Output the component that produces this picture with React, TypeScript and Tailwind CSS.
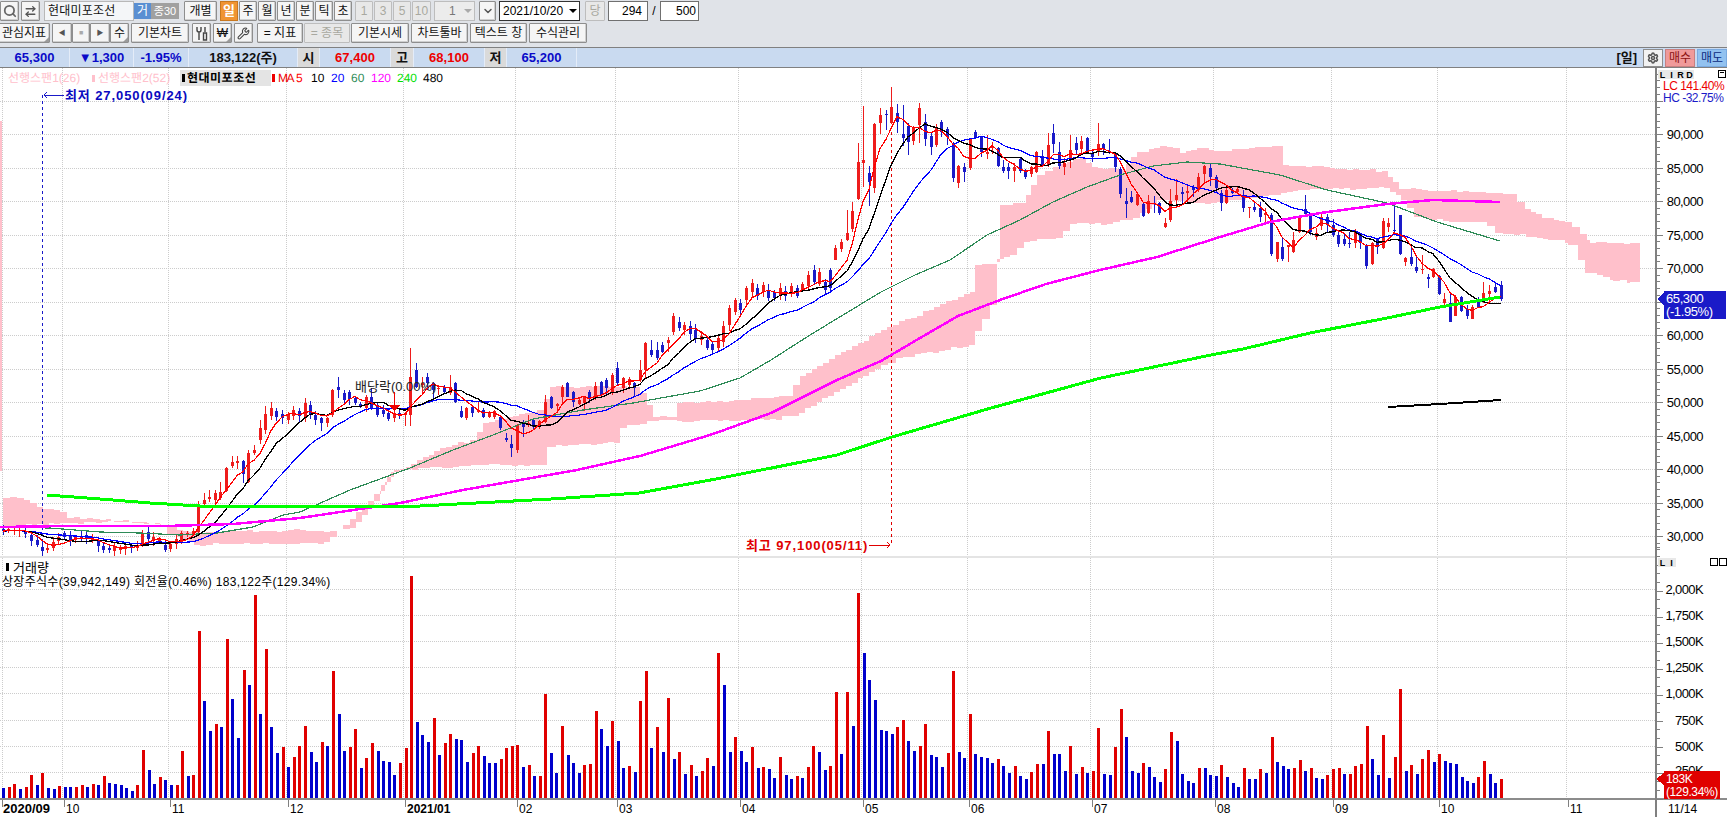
import type { ReactNode } from 'react';
import { Search, ArrowRightLeft, Wrench, Settings, ChevronDown } from 'lucide-react';

// volume bars in 1/3 px, positive = red, negative = blue
const VOL = [
  -32, 36, 44, -30, 36, 71, -42, 77, -33, -30, 39, -36, -36, 36, 42, -36, 45, -42, 69, -47,
  -44, -42, -33, -24, 42, 147, -87, -45, 66, -57, -42, 42, 144, -69, 72, 504, -294, -204, 225, -216,
  480, -300, -183, 387, -342, 612, -255, 450, -216, -138, 156, -96, 126, 159, 219, -141, -111, 171, -159, 384,
  -255, -144, 156, 210, -93, 123, 168, -144, -114, -111, -72, 108, 153, 669, -230,
  -191, -170, 242, -131, 167, 194, -179, -176, -110, 137, 158, -128, -107, -107, 119, 152, 158, 161, -95, 101,
  -68, 68, 314, -137, -77, 218, -131, -107, -77, 101, 104, 263, -209, -158, 233, -173, -92, 98, -80, 293,
  383, -152, 215, -140, 302, -119, 140, -74, 101, -68, 83, 122, -98, 437, -341, -140, 185, -143, -110, 155,
  -92, 95, -89, -62, 125, -71, -59, 68, -62, 95, 158, -140, -86, 98, 320, -134, 320, -218, 617, -437,
  -356, -296, -206, -203, -194, 215, 236, -173,
  -143, 158, 224, -131, -125, -95, 137, 383, -140, -122, 254, -134, -125, -122, -107, 119, -98, -77, 98, -68,
  -59, 80, 104, -104, 203, -134, -134, -83, 158, -74, 95, -77, 83, 212, -74, -71, 155, 269, -185, -83,
  -77, 107, -95, -65, -50, 89, 200, -173, -74, -53, -47, 92, -92, -71, -68, 101, -65, -47, -35, 92,
  -59, -59, 89, -77, 185, -110, -98, -89, 92, 116, -83, 92, -62, -59, 71, 89, 92, -74, 74, 98,
  104, 218, -119, -71, 191, -62, 125, 329,
  -83, 101, -74, 119, 146, -110, 134, -113, -107, -104, -65, -53, -47, 65, 113, -74, -47, 59,
];

type C = [number, number, number, number, number?, number?];

// candles read per crop: [x, bodyTop, bodyBottom, colour, wickTop, wickBottom], coordinates at 3x from ox,oy
const SEG_A: C[] = [
  [10, 237, 243, -1], [25, 238, 241, 1], [42, 239, 242, 1], [58, 240, 244, 1], [75, 247, 253, -1], [92, 256, 274, -1],
  [110, 270, 285, -1], [127, 292, 304, -1, 276, 317], [142, 293, 301, 1], [160, 276, 294, 1], [175, 261, 273, 1],
  [193, 250, 262, -1], [211, 259, 271, -1], [226, 261, 269, 1], [244, 259, 265, -1], [259, 256, 268, -1], [277, 266, 270, 1],
  [295, 273, 289, -1], [310, 288, 300, -1], [328, 295, 299, -1], [343, 288, 302, 1], [361, 295, 301, 1], [376, 288, 298, 1],
  [394, 289, 293, -1], [412, 286, 294, 1], [427, 249, 287, 1, 240, 290], [445, 245, 267, -1], [460, 261, 273, 1],
  [478, 268, 272, 1], [496, 285, 300, -1], [511, 281, 296, 1], [529, 267, 283, 1], [544, 248, 278, 1, 243, 282], [562, 248, 252, 1, 243, 262],
  [580, 242, 254, 1, 235, 258], [595, 170, 245, 1, 152, 248], [613, 149, 161, 1, 130, 165], [628, 140, 146, 1, 120, 155],
  [646, 130, 150, 1, 120, 165], [661, 127, 143, 1, 95, 150], [679, 55, 122, 1, 50, 125], [697, 37, 49, 1, 18, 55], [712, 34, 40, 1, 18, 58],
  [730, 32, 72, -1, 30, 98], [745, 10, 95, 1, 0, 100], [763, 0, 10, 1, -15, 15],
];
const SEG_B: C[] = [
  [260, 428, 440, 1, 420, 444], [265, 414, 430, 1, 406, 434], [271, 408, 416, 1, 402, 420], [276, 411, 417, -1, 408, 421],
  [282, 414, 418, -1, 410, 424], [288, 414, 420, 1, 412, 424], [293, 410, 416, 1, 406, 420], [299, 411, 416, -1, 408, 422],
];
const SEG_C: C[] = [
  [14, 190, 235, 1], [30, 195, 225, -1], [46, 225, 240, -1], [64, 235, 250, -1, 230, 272], [81, 235, 250, 1, 232, 262],
  [97, 150, 225, 1, 148, 230], [115, 140, 150, -1, 112, 175], [131, 160, 180, -1], [148, 155, 178, -1, 150, 195], [165, 175, 188, -1, 170, 195],
  [181, 193, 198, -1, 185, 205], [198, 170, 205, 1, 165, 215], [214, 170, 205, -1, 145, 210], [232, 195, 225, -1, 190, 232],
  [250, 210, 222, -1, 195, 232], [265, 218, 238, -1, 205, 242], [283, 218, 235, 1, 212, 245], [298, 219, 223, -1, 210, 238],
  [316, 220, 224, 1, 215, 258], [331, 110, 225, 1, 25, 258], [349, 90, 140, -1, 70, 145], [365, 130, 135, 1, 110, 165], [382, 110, 128, -1, 98, 150],
  [400, 130, 150, -1, 125, 178], [415, 143, 148, 1, 135, 165], [433, 140, 155, -1, 135, 158], [450, 142, 160, 1, 105, 165], [466, 128, 185, -1, 125, 190],
  [483, 212, 230, -1, 198, 235], [499, 205, 235, 1, 200, 240], [517, 200, 220, -1, 198, 232], [535, 210, 217, 1, 185, 220], [550, 210, 230, -1, 205, 235],
  [566, 218, 230, 1, 212, 233], [583, 212, 232, 1, 210, 236], [601, 230, 265, -1, 225, 270], [617, 293, 300, -1, 280, 305], [634, 312, 325, -1, 285, 350],
  [652, 255, 330, 1, 252, 340], [668, 250, 262, -1, 240, 292], [685, 248, 252, 1, 225, 262], [700, 240, 262, -1, 238, 268], [718, 243, 262, 1, 240, 268],
  [735, 185, 245, 1, 165, 248], [752, 170, 205, -1, 168, 208], [770, 193, 198, 1, 190, 212], [785, 140, 170, 1, 135, 190], [802, 128, 170, -1, 125, 172],
  [820, 155, 185, -1, 152, 200], [836, 180, 192, 1, 170, 195], [853, 170, 188, 1, 168, 212], [868, 155, 175, -1, 150, 190], [886, 138, 175, 1, 125, 180],
  [902, 125, 165, -1, 122, 168], [918, 120, 145, -1, 115, 165], [936, 105, 155, 1, 100, 165], [952, 85, 130, -1, 65, 135], [970, 115, 145, 1, 112, 160],
  [987, 118, 135, 1, 112, 142], [1003, 130, 145, -1, 125, 170], [1020, 90, 120, 1, 60, 125], [1036, 10, 90, 1, 5, 115], [1053, 30, 45, -1, 0, 50],
  [1070, 30, 55, -1, 5, 60], [1087, 15, 35, -1, 5, 40], [1105, 0, 10, 1, -8, 35],
];
const SEG_D: C[] = [
  [673, 316, 332, 1], [679, 322, 328, -1], [684, 325, 330, 1], [690, 326, 334, -1], [695, 330, 338, -1], [701, 336, 340, 1], [707, 340, 348, -1],
  [712, 344, 350, -1], [718, 338, 348, 1], [723, 326, 342, 1], [729, 308, 325, 1], [735, 300, 312, 1], [740, 303, 310, -1], [746, 288, 300, 1],
  [752, 283, 292, 1], [757, 288, 296, -1], [763, 285, 292, 1], [768, 290, 298, -1], [774, 292, 298, -1], [780, 288, 295, 1], [785, 291, 296, -1],
  [791, 286, 292, 1], [797, 288, 296, -1], [802, 284, 290, 1], [808, 275, 286, 1], [814, 270, 282, -1], [819, 272, 284, 1], [825, 282, 290, -1], [830, 270, 288, -1],
];
const SEG_E: C[] = [
  [46, 505, 540, 1, 495, 540], [64, 485, 507, 1, 478, 515], [80, 460, 480, 1, 390, 482], [97, 393, 447, 1, 365, 455], [115, 247, 357, 1, 190, 360],
  [130, 240, 248, 1, 78, 320], [148, 278, 305, -1, 258, 378], [163, 133, 325, 1, 130, 340], [181, 105, 128, 1, 85, 162], [197, 102, 105, -1, 90, 150],
  [214, 82, 128, 1, 22, 132], [232, 100, 125, -1, 72, 158], [248, 162, 175, -1, 75, 198], [265, 137, 187, -1, 130, 225], [280, 143, 182, 1, 138, 195],
  [298, 85, 135, 1, 68, 190], [316, 125, 178, -1, 102, 198], [332, 167, 200, -1, 158, 225], [349, 145, 195, 1, 132, 200], [364, 125, 155, -1, 120, 170],
  [382, 148, 170, -1, 142, 195], [400, 190, 293, -1, 185, 305], [415, 258, 310, 1, 255, 323], [433, 262, 275, -1, 250, 305], [449, 178, 263, 1, 175, 270],
  [466, 155, 172, -1, 150, 178], [482, 170, 215, -1, 168, 232], [500, 215, 222, 1, 165, 238], [516, 200, 204, 1, 185, 222], [533, 205, 258, -1, 200, 262],
  [550, 262, 272, -1, 240, 278], [565, 262, 272, -1, 250, 298], [583, 262, 272, 1, 250, 305], [601, 238, 272, -1, 235, 280], [616, 272, 290, -1, 268, 298],
  [634, 262, 283, 1, 258, 290], [649, 215, 275, 1, 212, 280], [667, 228, 258, -1, 210, 262], [685, 195, 255, 1, 160, 262], [700, 158, 193, -1, 132, 218],
  [718, 215, 258, -1, 185, 268], [733, 248, 262, 1, 235, 285], [751, 210, 240, 1, 165, 265], [767, 188, 210, -1, 170, 222], [784, 183, 208, 1, 168, 225],
  [802, 175, 218, -1, 172, 222], [817, 222, 232, -1, 210, 245], [835, 192, 215, 1, 130, 228], [850, 192, 208, -1, 188, 225], [868, 213, 217, -1, 178, 222],
  [886, 222, 262, -1, 218, 275], [901, 267, 342, -1, 262, 355], [919, 362, 372, -1, 325, 415], [934, 352, 366, -1, 332, 368], [952, 342, 375, 1, 335, 378],
  [970, 372, 408, -1, 370, 412], [985, 362, 400, 1, 345, 402], [1003, 368, 372, -1, 348, 398], [1018, 368, 400, -1, 365, 405], [1036, 428, 440, 1, 415, 445],
  [1051, 362, 420, 1, 328, 425], [1069, 345, 360, 1, 298, 380], [1087, 335, 342, -1, 322, 368], [1102, 332, 338, 1, 318, 365], [1120, 322, 330, -1, 315, 352],
  [1135, 290, 330, 1, 278, 335], [1153, 258, 282, 1, 255, 312], [1171, 265, 290, -1, 252, 318], [1187, 292, 325, -1, 285, 335],
];
const SEG_F: C[] = [
  [3, 10, 40, -1, 0, 62], [19, 0, 40, 1, -8, 42], [37, 0, 10, -1, -5, 12], [52, -3, 5, 1, -8, 12], [70, 20, 55, -1, 0, 65], [88, 50, 55, 1, 50, 85],
  [103, 50, 60, -1, 35, 65], [121, 55, 82, -1, 35, 95], [136, 70, 75, 1, 55, 100], [154, 75, 192, -1, 70, 198], [172, 155, 208, 1, 155, 215],
  [187, 172, 207, -1, 145, 212], [205, 165, 170, 1, 165, 215], [220, 150, 185, 1, 125, 188], [238, 82, 125, 1, 80, 128], [256, 58, 72, -1, 15, 75],
  [271, 75, 125, -1, 70, 135], [289, 128, 140, 1, 115, 150], [304, 82, 108, 1, 68, 120], [322, 80, 105, -1, 72, 125], [340, 105, 135, -1, 88, 140],
  [355, 135, 162, -1, 125, 172], [373, 148, 162, -1, 130, 168], [388, 158, 162, -1, 125, 175], [406, 125, 158, 1, 118, 175], [421, 130, 160, -1, 128, 178],
  [439, 168, 228, -1, 162, 238], [457, 158, 222, 1, 155, 225], [472, 148, 170, -1, 143, 192], [490, 92, 175, 1, 85, 178], [505, 98, 110, 1, 85, 125],
  [523, 120, 122, -1, 45, 128], [541, 75, 192, -1, 75, 196], [556, 205, 215, 1, 200, 228], [574, 200, 222, -1, 165, 228], [589, 232, 243, -1, 195, 248],
  [607, 236, 238, 1, 195, 252], [625, 260, 268, -1, 252, 295], [640, 238, 262, 1, 235, 265], [658, 258, 312, -1, 255, 315], [673, 328, 340, 1, 310, 350],
  [691, 340, 395, -1, 310, 395], [706, 322, 377, 1, 315, 378], [724, 320, 362, -1, 318, 365], [742, 358, 378, -1, 345, 388], [757, 350, 387, 1, 345, 388],
  [775, 330, 350, -1, 322, 352], [790, 310, 335, 1, 277, 340], [808, 302, 312, 1, 285, 340], [826, 290, 305, -1, 280, 310], [842, 285, 328, -1, 272, 332],
];

type Candle = { x: number; top: number; bot: number; up: boolean; wt: number; wb: number };

let seed = 7;
const rnd = () => {
  seed = (seed * 9301 + 49297) % 233280;
  return seed / 233280;
};

const place = (seg: C[], ox: number, oy: number, k: number): Candle[] =>
  seg.map(([x, t, b, c, wt, wb]) => {
    const top = oy + t / k;
    const bot = oy + b / k;
    return {
      x: Math.round(ox + x / k),
      top,
      bot,
      up: c > 0,
      wt: wt !== undefined ? oy + wt / k : top - 2 - rnd() * 4,
      wb: wb !== undefined ? oy + wb / k : bot + 2 + rnd() * 4,
    };
  });

const CANDLES = [
  ...place(SEG_A, 0, 450, 3),
  ...place(SEG_B, 0, 0, 1),
  ...place(SEG_C, 300, 340, 3),
  ...place(SEG_D, 0, 0, 1),
  ...place(SEG_E, 820, 80, 3),
  ...place(SEG_F, 1220, 190, 3),
];

const maLine = (n: number) => {
  const closes = CANDLES.map((c) => (c.up ? c.top : c.bot));
  return CANDLES.map((c, i) => {
    let s = 0;
    for (let k = 0; k < n; k++) s += closes[Math.max(0, i - k)];
    return `${c.x},${(s / n).toFixed(1)}`;
  }).join(' ');
};

// the cloud is drawn per trading day, so its outline comes out as small stairs
const stairs = (pts: string) => {
  const p = pts.split(' ').map((s) => s.split(',').map(Number));
  const out: string[] = [];
  for (let i = 0; i < p.length; i++) {
    const [x0, y0] = p[i];
    const [x1, y1] = p[(i + 1) % p.length];
    out.push(`${x0},${y0}`);
    const n = Math.floor(Math.abs(x1 - x0) / 5.6);
    let last = y0;
    for (let k = 1; k < n; k++) {
      const x = x0 + ((x1 - x0) * k) / n;
      const y = Math.round(y0 + ((y1 - y0) * k) / n + (rnd() - 0.5) * 2.4);
      out.push(`${x.toFixed(1)},${last}`, `${x.toFixed(1)},${y}`);
      last = y;
    }
    out.push(`${x1},${last}`);
  }
  return out.join(' ');
};

const MA60 =
  '0,527 50,528 100,532 140,533 180,535 217,533 253,527 283,515 300,512 350,490 410,468 453,450 493,435 533,419 583,410 633,403 700,391 740,378 771,360 810,335 848,312 881,292 915,275 950,260 987,235 1020,220 1053,202 1087,187 1120,175 1153,166 1187,162 1220,164 1280,175 1327,190 1387,203 1437,222 1500,241';
const MA120 =
  '0,527 67,526 167,526 233,524 300,518 400,503 463,490 577,470 640,456 700,438 716,433 771,413 837,380 881,361 920,338 958,316 1000,300 1046,284 1100,270 1157,257 1220,237 1270,222 1320,213 1387,204 1433,200 1500,202';
const MA240 =
  '47,495 100,499 150,503 200,506 300,506 420,506 551,499 639,493 716,479 837,455 892,437 991,408 1101,378 1211,355 1243,349 1310,333 1387,318 1440,307 1500,297';
const CLOUD = stairs(
  '3,498 17,498 30,503 43,509 60,512 67,518 100,520 140,522 167,525 177,530 200,533 300,530 330,531 350,528 374,501 391,472 400,470 417,460 440,448 470,440 483,423 507,417 537,410 550,387 633,387 640,393 653,417 667,417 677,403 700,402 740,400 785,396 800,376 881,330 970,292 975,265 997,262 1000,205 1020,203 1037,175 1053,167 1080,158 1092,167 1120,170 1137,152 1160,146 1173,148 1180,153 1197,148 1220,151 1272,146 1283,165 1382,171 1399,189 1509,194 1525,209 1542,218 1565,222 1587,240 1590,243 1630,243 1640,246 1640,282 1630,283 1627,280 1613,280 1610,277 1590,273 1585,260 1578,245 1568,243 1565,240 1520,235 1503,233 1487,222 1460,222 1420,217 1407,200 1390,188 1310,190 1211,204 1163,200 1140,218 1113,224 1077,224 1063,238 1030,242 1017,255 997,262 997,305 975,345 903,358 881,369 799,416 770,420 700,421 653,421 640,425 627,428 620,443 550,447 547,465 477,465 400,470 374,501 350,525 330,542 300,544 250,543 200,545 177,535 167,525 120,522 60,524 3,527',
);

const RED = '#ee1c1c';
const BLUE = '#1a1ac8';
const MONTHS = [62, 168, 286, 403, 515, 615, 738, 861, 967, 1090, 1213, 1331, 1437, 1566];
const MONTH_LABELS = ['10', '11', '12', '2021/01', '02', '03', '04', '05', '06', '07', '08', '09', '10', '11'];
const PRICES = [90000, 85000, 80000, 75000, 70000, 65000, 60000, 55000, 50000, 45000, 40000, 35000, 30000];
const VOLS = ['2,000K', '1,750K', '1,500K', '1,250K', '1,000K', '750K', '500K', '250K'];

const priceY = (p: number) => 335 - (p - 60000) * 0.0067;

function Chart() {
  const ticks: ReactNode[] = [];
  for (let p = 28000; p <= 100000; p += 1000) {
    const long = p % 5000 === 0;
    const y = Math.round(priceY(p)) + 0.5;
    ticks.push(<line key={`p${p}`} x1={1657} x2={long ? 1663 : 1660} y1={y} y2={y} stroke="#808080" />);
  }
  for (let i = 0; i < 30; i++) {
    const y = Math.round(798.7 - i * 8.67) + 0.5;
    ticks.push(<line key={`v${i}`} x1={1657} x2={i % 3 === 0 ? 1663 : 1660} y1={y} y2={y} stroke="#808080" />);
  }
  const step = (1500.7 - 3.3) / (VOL.length - 1);

  return (
    <svg viewBox="0 68 1727 749" className="block w-[1727px] h-[749px]" shapeRendering="crispEdges">
      {/* grid */}
      {[...PRICES, 95000].map((p) => (
        <line key={p} x1={0} x2={1656} y1={Math.round(priceY(p)) + 0.5} y2={Math.round(priceY(p)) + 0.5} stroke="#cccccc" strokeDasharray="1 1" />
      ))}
      {[589, 615, 641, 667, 693, 720, 746, 772].map((y) => (
        <line key={y} x1={0} x2={1656} y1={y + 0.5} y2={y + 0.5} stroke="#cccccc" strokeDasharray="1 1" />
      ))}
      {[2, ...MONTHS].map((x) => (
        <line key={x} x1={x + 0.5} x2={x + 0.5} y1={68} y2={799} stroke="#cccccc" strokeDasharray="1 1" />
      ))}

      {/* ichimoku cloud */}
      <rect x={0} y={121} width={2} height={350} fill="#ffc0cb" />
      <polygon points={CLOUD} fill="#ffc0cb" />

      {/* dashed markers */}
      <line x1={42.5} x2={42.5} y1={95} y2={552} stroke="#1a1ac8" strokeDasharray="3 3" />
      <line x1={891.5} x2={891.5} y1={120} y2={545} stroke="#e00000" strokeDasharray="3 3" />

      {/* candles */}
      {CANDLES.map((c, i) => (
        <g key={i} fill={c.up ? RED : BLUE} stroke="none">
          <rect x={c.x} y={c.wt} width={1} height={Math.max(1, c.wb - c.wt)} />
          <rect x={c.x - 1} y={c.top} width={3} height={Math.max(1, c.bot - c.top)} />
        </g>
      ))}

      {/* moving averages */}
      <polyline points={MA60} fill="none" stroke="#2e8b57" strokeWidth={1.2} />
      <polyline points={maLine(20)} fill="none" stroke="#0000ff" strokeWidth={1.2} />
      <polyline points={maLine(10)} fill="none" stroke="#000000" strokeWidth={1.3} />
      <polyline points={maLine(5)} fill="none" stroke="#ff0000" strokeWidth={1.2} />
      <polyline points={MA120} fill="none" stroke="#ff00ff" strokeWidth={2.5} />
      <polyline points={MA240} fill="none" stroke="#00ff00" strokeWidth={3} />
      <polyline points="1388,407 1440,404 1501,400" fill="none" stroke="#000000" strokeWidth={2} />

      {/* volume */}
      {VOL.map((v, i) => {
        const h = Math.abs(v) / 3;
        return (
          <rect key={i} x={Math.round(3.3 + i * step) - 1} y={798.7 - h} width={3} height={h} fill={v > 0 ? '#e00000' : '#0000cc'} />
        );
      })}

      {/* legend */}
      <g fontSize={12} textRendering="geometricPrecision">
        <text x={8} y={82} fill="#ffc0cb">선행스팬1(26)</text>
        <rect x={92} y={75} width={3} height={7} fill="#ffc0cb" />
        <text x={98} y={82} fill="#ffc0cb">선행스팬2(52)</text>
        <rect x={180} y={70} width={91} height={16} fill="#e4e4e4" />
        <rect x={182} y={74} width={3} height={8} fill="#000" />
        <text x={187} y={82} fontWeight={700} fill="#000" letterSpacing={0.5}>현대미포조선</text>
        <rect x={272} y={74} width={3} height={8} fill="#ee0000" />
        <text x={278} y={82} fill="#ee0000" letterSpacing={-1.5}>MA</text>
        <text x={296} y={82} fill="#ff0000">5</text>
        <text x={311} y={82} fill="#000">10</text>
        <text x={331} y={82} fill="#0000ff">20</text>
        <text x={351} y={82} fill="#2e8b57">60</text>
        <text x={371} y={82} fill="#ff00ff">120</text>
        <text x={397} y={82} fill="#00e000">240</text>
        <text x={423} y={82} fill="#000">480</text>
      </g>

      {/* low / high annotations */}
      <line x1={44} x2={64} y1={95.5} y2={95.5} stroke="#1a1ac8" />
      <polyline points="47,92 44,95 47,98" fill="none" stroke="#1a1ac8" />
      <text x={65} y={100} fontSize={13} fontWeight={700} fill="#0a0ac0" letterSpacing={0.9}>최저 27,050(09/24)</text>
      <text x={746} y={550} fontSize={13} fontWeight={700} fill="#e00000" letterSpacing={0.9}>최고 97,100(05/11)</text>
      <line x1={869} x2={890} y1={545.5} y2={545.5} stroke="#e00000" />
      <polyline points="887,542 890,545 887,548" fill="none" stroke="#e00000" />

      {/* dividend marker */}
      <text x={355} y={391} fontSize={13} fill="#222">배당락(0.00%)</text>
      <line x1={394.5} x2={394.5} y1={392} y2={406} stroke="#ee0000" />
      <polygon points="389,405 400,405 394.5,411" fill="#ee0000" />

      {/* pane separator and axes */}
      <rect x={0} y={556} width={1656} height={2} fill="#e4e4e4" />
      <rect x={0} y={798} width={1727} height={2} fill="#8c8c8c" />
      <rect x={1655} y={68} width={2} height={749} fill="#808080" />
      {ticks}
      {[0, ...MONTHS].map((x) => (
        <line key={`t${x}`} x1={x + 2.5} x2={x + 2.5} y1={800} y2={807} stroke="#808080" />
      ))}

      {/* price axis */}
      <g fontSize={13} letterSpacing={-0.6} fill="#000">
        {PRICES.filter((p) => p !== 65000).map((p) => (
          <text key={p} x={1703} y={Math.round(priceY(p)) + 5} textAnchor="end">
            {p.toLocaleString('en-US')}
          </text>
        ))}
        {VOLS.map((v, i) => (
          <text key={v} x={1703} y={[589, 615, 641, 667, 693, 720, 746, 770][i] + 5} textAnchor="end">
            {v}
          </text>
        ))}
      </g>
      <text x={1663} y={90} fontSize={12} letterSpacing={-0.5} fill="#ee0000">LC 141.40%</text>
      <text x={1663} y={102} fontSize={12} letterSpacing={-0.5} fill="#1a1ac8">HC -32.75%</text>

      {/* L I R D boxes */}
      <g fontSize={9} fontWeight={700} fill="#000">
        {[['L', 1658], ['I', 1667], ['R', 1676], ['D', 1685]].map(([t, x]) => (
          <g key={t as string}>
            <rect x={x as number} y={70} width={9} height={9} fill="#e8e8e8" />
            <text x={(x as number) + 4.5} y={78} textAnchor="middle">{t}</text>
          </g>
        ))}
        <rect x={1658} y={558} width={9} height={9} fill="#e8e8e8" />
        <text x={1662.5} y={566} textAnchor="middle">L</text>
        <rect x={1667} y={558} width={9} height={9} fill="#e8e8e8" />
        <text x={1671.5} y={566} textAnchor="middle">I</text>
      </g>
      <rect x={1718.5} y={70.5} width={7} height={7} fill="none" stroke="#000" />
      <rect x={1720} y={72} width={4} height={1} fill="#000" />
      <rect x={1710.5} y={558.5} width={7} height={7} fill="none" stroke="#000" />
      <rect x={1719.5} y={558.5} width={7} height={7} fill="none" stroke="#000" />

      {/* current value flags */}
      <polygon points="1657,299 1664,293 1664,305" fill="#1a1ac8" />
      <rect x={1664} y={291} width={62} height={28} fill="#1a1ac8" />
      <text x={1666} y={303} fontSize={13} fill="#fff" letterSpacing={-0.4}>65,300</text>
      <text x={1666} y={316} fontSize={13} fill="#fff" letterSpacing={-0.4}>(-1.95%)</text>
      <polygon points="1656,779 1664,773 1664,785" fill="#e00000" />
      <rect x={1664} y={771} width={56} height={28} fill="#e00000" />
      <text x={1666} y={783} fontSize={12} fill="#fff" letterSpacing={-0.4}>183K</text>
      <text x={1666} y={796} fontSize={12} fill="#fff" letterSpacing={-0.4}>(129.34%)</text>

      {/* volume pane captions */}
      <rect x={6} y={563} width={3} height={8} fill="#000" />
      <text x={13} y={572} fontSize={13} fill="#000">거래량</text>
      <text x={2} y={586} fontSize={12} fill="#000" letterSpacing={0.3}>상장주식수(39,942,149) 회전율(0.46%) 183,122주(129.34%)</text>

      {/* date axis */}
      <text x={3} y={813} fontSize={13} fontWeight={700} fill="#000">2020/09</text>
      {MONTHS.map((x, i) => (
        <text key={x} x={x + 4} y={813} fontSize={12} fontWeight={MONTH_LABELS[i] === '2021/01' ? 700 : 400} fill="#000">
          {MONTH_LABELS[i]}
        </text>
      ))}
      <text x={1668} y={813} fontSize={12} fill="#000">11/14</text>
    </svg>
  );
}

function Btn({ className, children }: { className: string; children?: ReactNode }) {
  return (
    <div
      className={`relative h-[20px] flex items-center justify-center shrink-0 border border-[#8e8e8e] rounded-[1px] bg-[#f5f5f5] shadow-[inset_-1px_-1px_0_#cfcfcf] text-[12px] text-[#111] whitespace-nowrap ${className}`}
    >
      {children}
    </div>
  );
}

function Off({ className, children }: { className: string; children?: ReactNode }) {
  return (
    <div className={`h-[20px] flex items-center justify-center shrink-0 border border-[#bdbdbd] rounded-[1px] bg-[#e8e8e8] text-[12px] text-[#a8a8a0] ${className}`}>
      {children}
    </div>
  );
}

function Corner() {
  return <span className="absolute right-0 bottom-0 w-0 h-0 border-l-[5px] border-l-transparent border-b-[5px] border-b-[#9a9a9a]" />;
}

function InfoCell({ className, children }: { className: string; children: ReactNode }) {
  return (
    <div className={`h-full flex items-center justify-center shrink-0 border-r border-[#e4ecf8] font-bold text-[13px] ${className}`}>
      {children}
    </div>
  );
}

function ToolsIcon() {
  return (
    <svg width="14" height="15" viewBox="0 0 14 15" fill="none" stroke="#444" strokeWidth="1.4">
      <path d="M2 1v3a2 2 0 0 0 4 0V1M4 6v8" />
      <path d="M10 1v5M8.5 7h3v7h-3z" />
    </svg>
  );
}

export default function App() {
  return (
    <div className="w-[1727px] h-[817px] overflow-hidden bg-white flex flex-col [font-family:'Liberation_Sans','Noto_Sans_CJK_KR',sans-serif]">
      <div className="h-[47px] bg-[#e0e3e8] pt-px shrink-0">
        {/* first toolbar row */}
        <div className="flex items-center h-[20px]">
          <Btn className="w-[19px]"><Search size={14} strokeWidth={3} color="#666" /></Btn>
          <Btn className="w-[19px] ml-[2px]"><ArrowRightLeft size={13} strokeWidth={2.5} color="#555" /></Btn>
          <div className="w-[90px] h-[20px] ml-[4px] flex items-center pl-[3px] text-[12px] text-[#111] bg-[#f4f6f8] border border-[#b8b8b8] tracking-[0.2px]">현대미포조선</div>
          <div className="w-[17px] h-[16px] flex items-center justify-center bg-[#5a8fd2] text-white text-[12px]">거</div>
          <div className="w-[28px] h-[16px] flex items-center justify-center bg-[#a0a0a0] text-white text-[11px]">종30</div>
          <Btn className="w-[33px] ml-[5px]">개별</Btn>
          <div className="w-[18px] h-[20px] ml-[3px] flex items-center justify-center bg-[#f09433] border border-[#c87820] text-white font-bold text-[13px]">일</div>
          <div className="flex gap-px ml-px">
            <Btn className="w-[18px]">주</Btn>
            <Btn className="w-[18px]">월</Btn>
            <Btn className="w-[18px]">년</Btn>
            <Btn className="w-[18px]">분</Btn>
            <Btn className="w-[18px]">틱</Btn>
            <Btn className="w-[18px]">초</Btn>
          </div>
          <div className="flex gap-px ml-[3px]">
            <Off className="w-[18px]">1</Off>
            <Off className="w-[18px]">3</Off>
            <Off className="w-[18px]">5</Off>
            <Off className="w-[19px]">10</Off>
          </div>
          <div className="w-[41px] h-[20px] ml-[3px] flex items-center justify-between border border-[#bdbdbd] bg-[#ececec] text-[12px] text-[#777] pl-[14px] pr-[2px]">
            <span>1</span>
            <span className="w-0 h-0 border-l-[4px] border-r-[4px] border-t-[4px] border-l-transparent border-r-transparent border-t-[#aaa]" />
          </div>
          <Btn className="w-[17px] ml-[4px]"><ChevronDown size={12} strokeWidth={3} color="#555" /></Btn>
          <div className="w-[81px] h-[20px] ml-[3px] flex items-center justify-between border border-[#333] bg-white text-[12px] text-black pl-[3px] pr-[2px]">
            <span>2021/10/20</span>
            <span className="w-0 h-0 border-l-[4px] border-r-[4px] border-t-[4px] border-l-transparent border-r-transparent border-t-black" />
          </div>
          <Off className="w-[20px] ml-[5px]">당</Off>
          <div className="w-[40px] h-[20px] ml-[3px] flex items-center justify-end pr-[5px] border border-[#707070] bg-white text-[12px] text-black">294</div>
          <span className="w-[12px] text-center text-[12px] text-black">/</span>
          <div className="w-[39px] h-[20px] flex items-center justify-end pr-[2px] border border-[#707070] bg-white text-[12px] text-black">500</div>
        </div>

        {/* second toolbar row */}
        <div className="flex items-center h-[20px] mt-[2px] ml-[-2px]">
          <Btn className="w-[52px]">관심지표<Corner /></Btn>
          <div className="flex ml-[2px]">
            <Btn className="w-[20px]"><span className="text-[7px] text-[#555]">◀</span></Btn>
            <Btn className="w-[18px]"><span className="text-[7px] text-[#aaa]">■</span></Btn>
            <Btn className="w-[20px]"><span className="text-[7px] text-[#555]">▶</span></Btn>
            <Btn className="w-[19px]">수<Corner /></Btn>
          </div>
          <Btn className="w-[58px] ml-[2px]">기본차트</Btn>
          <Btn className="w-[19px] ml-[3px]"><ToolsIcon /></Btn>
          <Btn className="w-[19px] ml-[2px]">₩<Corner /></Btn>
          <Btn className="w-[19px] ml-[2px]"><Wrench size={13} strokeWidth={2} color="#444" /></Btn>
          <Btn className="w-[46px] ml-[4px]">= 지표</Btn>
          <Off className="w-[46px] ml-px">= 종목</Off>
          <Btn className="w-[58px] ml-px">기본시세</Btn>
          <Btn className="w-[57px] ml-[2px]">차트툴바</Btn>
          <Btn className="w-[57px] ml-[2px]">텍스트 창</Btn>
          <Btn className="w-[58px] ml-[2px]">수식관리</Btn>
        </div>
      </div>

      {/* quote strip */}
      <div className="h-[21px] shrink-0 flex items-center bg-[#c9daf0] border-y border-[#808080]">
        <InfoCell className="w-[70px] text-[#0a0ac8]">65,300</InfoCell>
        <InfoCell className="w-[64px] text-[#0a0ac8]">▼1,300</InfoCell>
        <InfoCell className="w-[55px] text-[#0a0ac8]">-1.95%</InfoCell>
        <InfoCell className="w-[109px] text-[#111]">183,122(주)</InfoCell>
        <InfoCell className="w-[22px] bg-[#dadada] text-[#111]">시</InfoCell>
        <InfoCell className="w-[71px] text-[#ee0000]">67,400</InfoCell>
        <InfoCell className="w-[23px] bg-[#dadada] text-[#111]">고</InfoCell>
        <InfoCell className="w-[71px] text-[#ee0000]">68,100</InfoCell>
        <InfoCell className="w-[22px] bg-[#dadada] text-[#111]">저</InfoCell>
        <InfoCell className="w-[70px] text-[#0a0ac8]">65,200</InfoCell>
        <div className="flex-1" />
        <span className="text-[13px] font-bold text-[#111] mr-[6px]">[일]</span>
        <div className="w-[20px] h-[18px] flex items-center justify-center bg-[#f2f2f2] border border-[#8e8e8e] mr-[2px]">
          <Settings size={12} strokeWidth={3} color="#555" />
        </div>
        <div className="w-[30px] h-[18px] flex items-center justify-center bg-[#f09a9a] border border-[#c88080] text-[#8c1010] text-[12px] mr-[2px]">매수</div>
        <div className="w-[30px] h-[18px] flex items-center justify-center bg-[#92c2f0] border border-[#7aaae0] text-[#0a2a80] text-[12px]">매도</div>
      </div>

      <Chart />
    </div>
  );
}
